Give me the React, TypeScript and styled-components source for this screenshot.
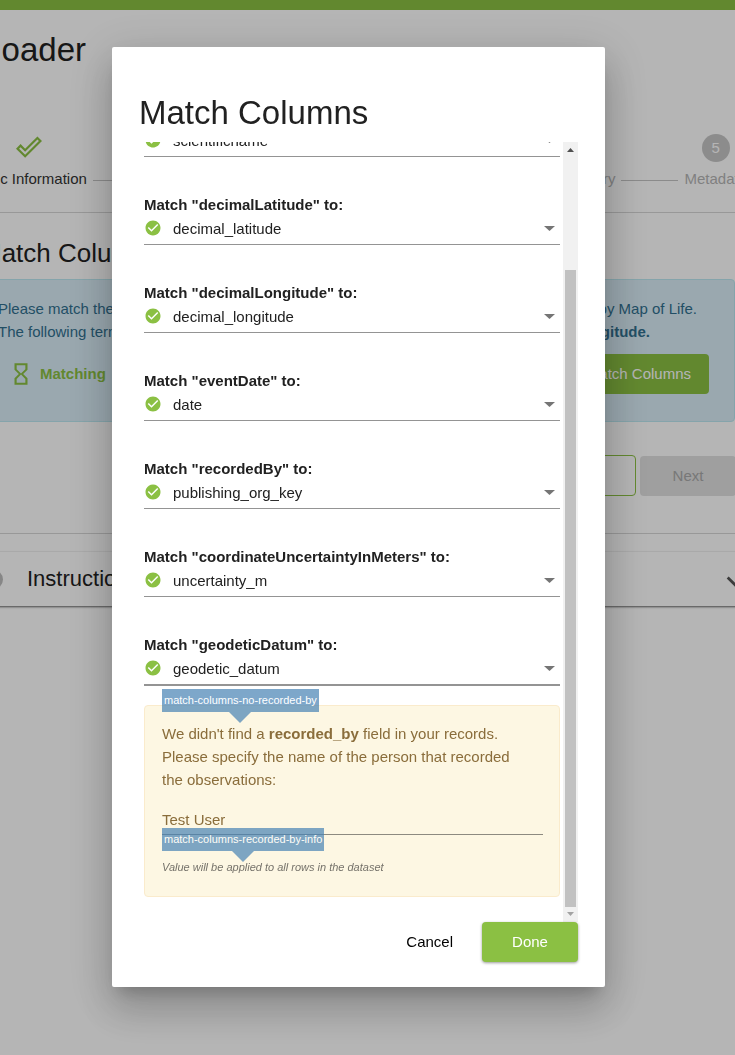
import React from "react";
import styled, { createGlobalStyle } from "styled-components";

const GlobalStyle = createGlobalStyle`
  *, *::before, *::after { box-sizing: border-box; }
  html, body { margin: 0; height: 100%; overflow: hidden; }
  body {
    background: #fff;
    color: #212121;
    font: 15px/24px "Liberation Sans", Arial, sans-serif;
  }
  button, input, select { font: inherit; color: inherit; }
`;

/* ---------- page behind the dialog ---------- */

const TopBar = styled.div`
  height: 10px;
  background: #8bc043;
`;

const PageHeader = styled.header`
  display: flex;
  justify-content: flex-end;
  width: 84px;
  margin: 20px 0 0 2px;
  overflow: hidden;
`;

const PageTitle = styled.h1`
  margin: 0;
  font-size: 33px;
  line-height: 40px;
  font-weight: 400;
`;

const Stepper = styled.ol`
  display: flex;
  align-items: flex-end;
  list-style: none;
  margin: 64px -12px 0 -29px;
  padding: 0;
`;

const Step = styled.li<{ $muted?: boolean }>`
  display: flex;
  flex-direction: column;
  align-items: center;
  gap: 5px;
  color: ${(p) => (p.$muted ? "#b5b5b5" : "#333")};
`;

const StepLabel = styled.span`
  white-space: nowrap;
`;

const StepNumber = styled.span`
  width: 28px;
  height: 28px;
  border-radius: 50%;
  background: #c6c6c6;
  color: #fff;
  line-height: 28px;
  text-align: center;
`;

const StepCheck = styled.svg`
  width: 26px;
  height: 26px;
  margin-bottom: 2px;
  fill: #8bc043;
`;

const StepLine = styled.li<{ $fixed?: boolean }>`
  flex: ${(p) => (p.$fixed ? "0 0 57px" : "1")};
  height: 1px;
  margin: 0 6px 10px;
  background: #c4c4c4;
`;

const Rule = styled.hr<{ $top: number }>`
  height: 1px;
  border: 0;
  margin: ${(p) => p.$top}px 0 0;
  background: #d6d6d6;
`;

const SectionTitle = styled.h2`
  margin: 24px 0 10px -20px;
  font-size: 26px;
  line-height: 32px;
  font-weight: 400;
`;

const InfoBox = styled.section`
  display: flex;
  flex-direction: column;
  height: 143px;
  padding: 17px 25px 0 15px;
  margin-left: -18px;
  border: 1px solid #bce8f1;
  border-radius: 4px;
  background: #d9edf7;
  color: #31708f;
`;

const InfoLine = styled.div`
  display: flex;
  justify-content: space-between;
  padding-right: 12px;
  line-height: 23px;
`;

const LastTerm = styled.strong`
  margin-right: 47px;
`;

const InfoActions = styled.div`
  display: flex;
  align-items: center;
  justify-content: space-between;
  margin-top: 11px;
  padding-left: 10px;
`;

const Status = styled.strong`
  display: flex;
  align-items: center;
  gap: 6px;
  color: #8bc043;
`;

const StatusIcon = styled.svg`
  width: 26px;
  height: 26px;
  fill: #8bc043;
`;

const Button = styled.button<{ $kind: "primary" | "outline" | "disabled" | "plain" }>`
  height: ${(p) => (p.$kind === "outline" ? 41 : 40)}px;
  padding: 0 18px;
  border: ${(p) => (p.$kind === "outline" ? "1px solid #8bc043" : "0")};
  border-radius: 4px;
  white-space: nowrap;
  background: ${(p) =>
    p.$kind === "primary" ? "#8bc043" : p.$kind === "disabled" ? "#e0e0e0" : "transparent"};
  color: ${(p) =>
    p.$kind === "primary" ? "#fff" : p.$kind === "disabled" ? "#a9a9a9" : "#000"};
`;

const WideButton = styled(Button)`
  width: 96px;
  flex: none;
`;

const Navigation = styled.div`
  display: flex;
  justify-content: flex-end;
  align-items: center;
  gap: 4px;
  margin: 33px -1px 0 0;
`;

const Panel = styled.button`
  display: flex;
  align-items: center;
  width: calc(100% + 32px);
  height: 54px;
  margin: 18px -16px 0;
  padding: 0 5px 0 0;
  border: 0;
  background: #fff;
  box-shadow: 0 1px 2px rgba(0, 0, 0, 0.6), 0 0 1px rgba(0, 0, 0, 0.12);
  font-size: 22px;
  text-align: left;
`;

const PanelDot = styled.span`
  width: 19px;
  height: 19px;
  border-radius: 50%;
  background: #bdbdbd;
  margin-right: 24px;
`;

const PanelLabel = styled.span`
  flex: 1;
`;

const PanelArrow = styled.svg`
  width: 22px;
  height: 22px;
  margin-top: 6px;
  fill: none;
  stroke: #555;
  stroke-width: 3;
`;

/* ---------- dialog ---------- */

const Backdrop = styled.div`
  position: fixed;
  inset: 0;
  display: flex;
  padding: 47px 130px 68px 112px;
  background: rgba(0, 0, 0, 0.29);
`;

const Dialog = styled.div`
  display: flex;
  flex-direction: column;
  flex: 1;
  min-width: 0;
  padding: 46px 27px 25px;
  border-radius: 2px;
  background: #fff;
  box-shadow: 0 11px 15px -7px rgba(0, 0, 0, 0.2), 0 24px 38px 3px rgba(0, 0, 0, 0.14),
    0 9px 46px 8px rgba(0, 0, 0, 0.12);
`;

const DialogTitle = styled.h2`
  margin: 0 0 9px;
  font-size: 33px;
  line-height: 40px;
  font-weight: 400;
`;

const DialogBody = styled.div`
  display: flex;
  gap: 3px;
  flex: 1;
  min-height: 0;
`;

const Fields = styled.div`
  display: flex;
  flex-direction: column;
  justify-content: flex-end;
  flex: 1;
  min-width: 0;
  overflow: hidden;
  padding: 0 0 25px 5px;
`;

const Field = styled.div<{ $focused?: boolean }>`
  flex: none;
  padding: 36px 0 3px;
  border-bottom: ${(p) => (p.$focused ? 2 : 1)}px solid #949494;
`;

const FieldLabel = styled.label`
  display: block;
  font-weight: 700;
`;

const FieldRow = styled.div`
  display: flex;
  align-items: center;
  height: 24px;
  padding-right: 5px;
`;

const Select = styled.select`
  appearance: none;
  flex: 1;
  min-width: 0;
  height: 24px;
  margin-left: 11px;
  padding: 0;
  border: 0;
  outline: 0;
  background: transparent;
`;

const CheckIcon = styled.svg`
  width: 18px;
  height: 18px;
  margin-bottom: 2px;
  fill: #8bc043;
`;

const ArrowIcon = styled.svg`
  width: 11px;
  height: 5px;
  margin-bottom: 2px;
  fill: #757575;
`;

const Scrollbar = styled.div`
  display: flex;
  flex-direction: column;
  width: 15px;
  background: #f1f1f1;
`;

const ScrollArrow = styled.svg`
  flex: none;
  width: 15px;
  height: 15px;
`;

const ScrollGap = styled.div`
  flex: 113;
`;

const ScrollThumb = styled.div`
  flex: 637;
  margin: 0 2px;
  background: #c1c1c1;
`;

const Notice = styled.section`
  position: relative;
  flex: none;
  margin-top: 19px;
  padding: 16px 16px 21px 17px;
  border: 1px solid #faebcc;
  border-radius: 4px;
  background: #fdf7e3;
  color: #8a6d3b;
`;

const NoticeText = styled.label`
  display: block;
  padding-right: 16px;
  line-height: 23px;
`;

const NameInput = styled.input`
  display: block;
  width: 100%;
  height: 27px;
  margin-top: 17px;
  padding: 0 0 3px;
  border: 0;
  border-bottom: 1px solid #8d8a80;
  border-radius: 0;
  outline: 0;
  background: transparent;
`;

const Hint = styled.p`
  margin: 24px 0 0;
  font-size: 11px;
  line-height: 16px;
  font-style: italic;
  color: #75726a;
`;

const Tag = styled.span<{ $top: number }>`
  position: absolute;
  left: 17px;
  top: ${(p) => p.$top}px;
  padding: 0 2px;
  background: #4682b4;
  opacity: 0.7;
  color: #fff;
  font-size: 11px;
  line-height: 23px;
  white-space: nowrap;

  &::after {
    content: "";
    position: absolute;
    top: 100%;
    left: 50%;
    margin-left: -11px;
    border: 11px solid transparent;
    border-top-color: #4682b4;
    border-bottom: 0;
  }
`;

const Actions = styled.div`
  display: flex;
  justify-content: flex-end;
  gap: 11px;
`;

const DoneButton = styled(WideButton)`
  box-shadow: 0 1px 3px rgba(0, 0, 0, 0.4);
`;

const columns: [string, string][] = [
  ["scientificName", "scientificname"],
  ["decimalLatitude", "decimal_latitude"],
  ["decimalLongitude", "decimal_longitude"],
  ["eventDate", "date"],
  ["recordedBy", "publishing_org_key"],
  ["coordinateUncertaintyInMeters", "uncertainty_m"],
  ["geodeticDatum", "geodetic_datum"],
];

export default function App() {
  return (
    <>
      <GlobalStyle />
      <TopBar />
      <PageHeader>
        <PageTitle>Uploader</PageTitle>
      </PageHeader>
      <main>
        <Stepper>
          <Step>
            <StepCheck viewBox="0 0 24 24">
              <path d="M19.77 5.03l1.4 1.4L8.43 19.17l-5.6-5.6 1.4-1.4 4.2 4.2L19.77 5.03m0-2.83L8.43 13.54l-4.2-4.2L0 13.57 8.43 22 24 6.43 19.77 2.2z" />
            </StepCheck>
            <StepLabel>Basic Information</StepLabel>
          </Step>
          <StepLine />
          <Step $muted>
            <StepNumber>4</StepNumber>
            <StepLabel>Summary</StepLabel>
          </Step>
          <StepLine $fixed />
          <Step $muted>
            <StepNumber>5</StepNumber>
            <StepLabel>Metadata</StepLabel>
          </Step>
        </Stepper>
        <Rule $top={21} />
        <SectionTitle>Match Columns</SectionTitle>
        <InfoBox>
          <InfoLine>
            <span>Please match the</span>
            <span>by Map of Life.</span>
          </InfoLine>
          <InfoLine>
            <span>The following terms</span>
            <LastTerm>longitude.</LastTerm>
          </InfoLine>
          <InfoActions>
            <Status>
              <StatusIcon viewBox="0 0 24 24">
                <path d="M6 2v6h.01L6 8.01 10 12l-4 4 .01.01H6V22h12v-5.99h-.01L18 16l-4-4 4-3.99-.01-.01H18V2H6zm10 14.5V20H8v-3.5l4-4 4 4zm-4-5l-4-4V4h8v3.5l-4 4z" />
              </StatusIcon>
              Matching
            </Status>
            <Button type="button" $kind="primary">Match Columns</Button>
          </InfoActions>
        </InfoBox>
        <Navigation>
          <WideButton type="button" $kind="outline" aria-label="Back" />
          <WideButton type="button" $kind="disabled" disabled>Next</WideButton>
        </Navigation>
        <Rule $top={37} />
        <Panel type="button">
          <PanelDot />
          <PanelLabel>Instructions</PanelLabel>
          <PanelArrow viewBox="0 0 24 24">
            <path d="M4 7l8 8 8-8" />
          </PanelArrow>
        </Panel>
      </main>

      <Backdrop>
        <Dialog role="dialog" aria-labelledby="dialog-title">
          <DialogTitle id="dialog-title">Match Columns</DialogTitle>
          <DialogBody>
            <Fields>
              {columns.map(([term, value], i) => (
                <Field key={term} $focused={i === columns.length - 1}>
                  <FieldLabel htmlFor={term}>Match "{term}" to:</FieldLabel>
                  <FieldRow>
                    <CheckIcon viewBox="0 0 24 24">
                      <path d="M12 2C6.48 2 2 6.48 2 12s4.480 10 10 10 10-4.480 10-10S17.520 2 12 2zm-2 15l-5-5 1.410-1.410L10 14.170l7.590-7.590L19 8l-9 9z" />
                    </CheckIcon>
                    <Select id={term} defaultValue={value}>
                      <option>{value}</option>
                    </Select>
                    <ArrowIcon viewBox="0 0 11 5">
                      <path d="M0 0h11L5.500 5z" />
                    </ArrowIcon>
                  </FieldRow>
                </Field>
              ))}
              <Notice>
                <NoticeText htmlFor="recorded-by">
                  We didn't find a <b>recorded_by</b> field in your records. Please specify the
                  name of the person that recorded the observations:
                </NoticeText>
                <NameInput id="recorded-by" type="text" defaultValue="Test User" />
                <Hint>Value will be applied to all rows in the dataset</Hint>
                <Tag $top={-17}>match-columns-no-recorded-by</Tag>
                <Tag $top={122}>match-columns-recorded-by-info</Tag>
              </Notice>
            </Fields>
            <Scrollbar aria-hidden="true">
              <ScrollArrow viewBox="0 0 15 15">
                <path d="M4 10h7L7.500 6z" fill="#505050" />
              </ScrollArrow>
              <ScrollGap />
              <ScrollThumb />
              <ScrollArrow viewBox="0 0 15 15">
                <path d="M4 5h7L7.500 9z" fill="#a3a3a3" />
              </ScrollArrow>
            </Scrollbar>
          </DialogBody>
          <Actions>
            <Button type="button" $kind="plain">Cancel</Button>
            <DoneButton type="button" $kind="primary">Done</DoneButton>
          </Actions>
        </Dialog>
      </Backdrop>
    </>
  );
}
